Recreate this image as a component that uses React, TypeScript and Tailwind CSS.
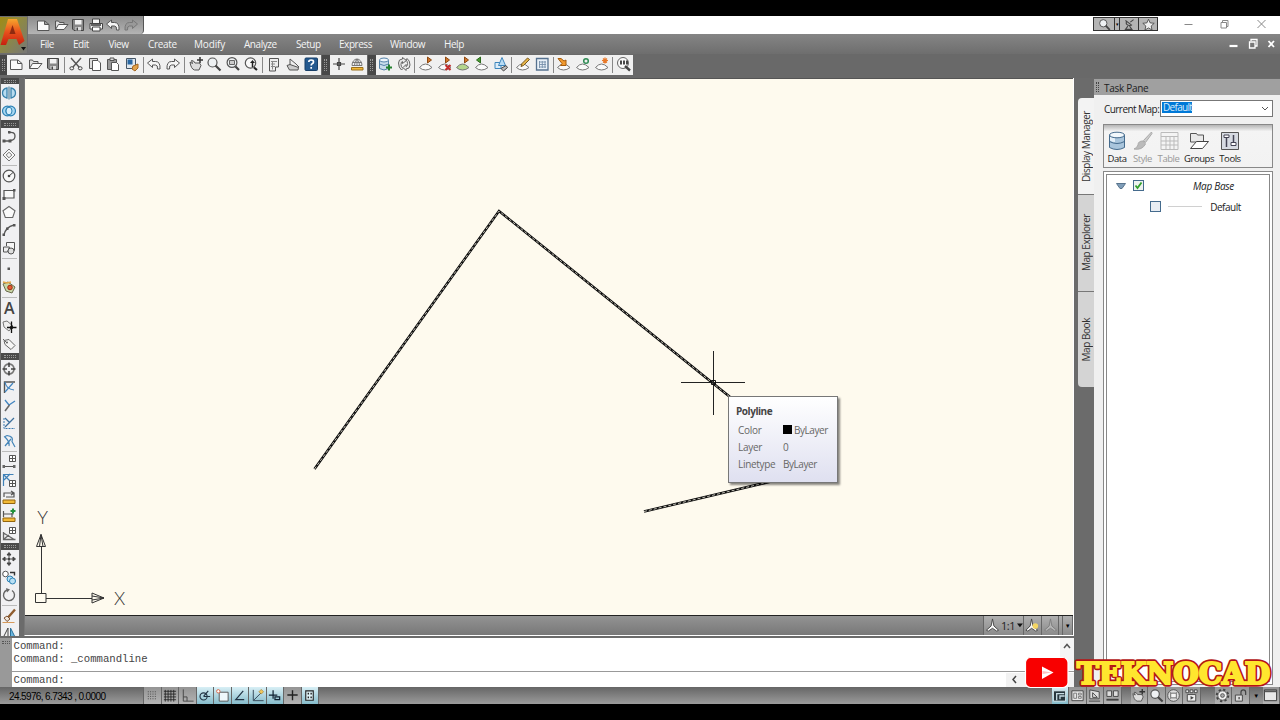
import type { ReactNode } from "react";

// Every glyph is drawn on a 16x16 grid.
const G = "#555";
const LIGHT = "#f4f4f4";

const layerSheet = (fill = "#fafafa") => (
  <path d="M1.5 11.5q3-3.500 6-3.500t6.500 3.500q-3 2.500-6.500 2.500t-6-2.500z" fill={fill} stroke="#777" />
);

const glyphs: Record<string, ReactNode> = {
  new: <path d="M2.500 4h7.500l4 3.500v6h-11.500zM9.500 4v3.500h4.500" fill="#fafafa" stroke={G} />,
  open: (
    <>
      <path d="M2.500 12.500v-8.500h3l1 1.500h4.500v2" fill="#ddd" stroke={G} />
      <path d="M2.500 12.500l3-5h9.500l-4 5z" fill="#fafafa" stroke={G} />
    </>
  ),
  save: (
    <>
      <path d="M2.500 2.500h11v11h-9.500l-1.500-1.500z" fill="#888" stroke="#444" />
      <path d="M5 3h6.500v4.500h-6.500z" fill="#f2f2f2" />
      <path d="M5.500 10h5.500v3.500h-5.500z" fill="#ddd" />
      <path d="M6.500 10.500h1.500v3h-1.500z" fill="#444" />
    </>
  ),
  print: (
    <>
      <path d="M4.500 6.500v-4.500h7v4.500M2 6.500h12.500v5.500h-12.500z" fill={LIGHT} stroke="#444" />
      <path d="M4.500 10h7.500v4h-7.500z" fill="#fff" stroke="#444" />
      <path d="M3 8h10" stroke="#333" strokeWidth="1.500" />
    </>
  ),
  undo: <path d="M1.500 7l5-4v2.500h3q5 0 4.500 7.500h-2.500q0.500-4-2-4h-3v2.500z" fill="#f5f5f5" stroke={G} />,
  redo: <path d="M14.500 7l-5-4v2.500h-3q-5 0-4.500 7.500h2.500q-0.500-4 2-4h3v2.500z" fill="#f5f5f5" stroke={G} />,
  redoDim: <path d="M14.500 7l-5-4v2.500h-3q-5 0-4.500 7.500h2.500q-0.500-4 2-4h3v2.500z" fill="#999" stroke="#777" />,
  cut: (
    <>
      <path d="M3 2l8 9M13 2l-8 9" stroke={G} strokeWidth="1.400" />
      <ellipse cx="3.800" cy="12.300" rx="1.900" ry="1.600" fill="none" stroke="#444" />
      <ellipse cx="12.200" cy="12.300" rx="1.900" ry="1.600" fill="none" stroke="#444" />
    </>
  ),
  copy: (
    <>
      <path d="M2.500 2.500h8v10h-8z" fill="#ddd" stroke={G} />
      <path d="M5.500 4.500h5.500l2.500 2.500v7.500h-8z" fill="#fff" stroke={G} />
    </>
  ),
  paste: (
    <>
      <path d="M2.500 3.500h9v10h-9z" fill="#999" stroke={G} />
      <path d="M5 2h4v2.500h-4z" fill="#ddd" stroke={G} />
      <path d="M6.500 6.500h5l2 2v6h-7z" fill="#fff" stroke={G} />
    </>
  ),
  match: (
    <>
      <path d="M2.500 2.500h9v10h-9z" fill="#dfe7ee" stroke="#456" />
      <path d="M3.500 3.500h5v5h-5z" fill="#2867a3" />
      <path d="M9 10l5-2v4l-3 3-3-2z" fill="#e0a24d" stroke="#a5671f" />
    </>
  ),
  pan: (
    <>
      <path d="M2 6l2.500 1.500-1-3 2 0.500 1.500 2h4.500l1.500 2.500-2 4.500h-4.500q-3.500-1-4.500-8z" fill="#ddd" stroke={G} />
      <path d="M12 1v6M9 4h6" stroke="#333" strokeWidth="1.500" />
    </>
  ),
  zoom: (
    <>
      <circle cx="6.500" cy="6.500" r="4.500" fill="#eef1f3" stroke="#555" strokeWidth="1.200" />
      <path d="M9.500 9.500l5 5" stroke="#444" strokeWidth="2.200" />
    </>
  ),
  zoomWin: (
    <>
      <circle cx="7" cy="6.500" r="4.900" fill="#eef1f3" stroke="#555" strokeWidth="1.200" />
      <path d="M4.500 4.500h5v4h-5z" fill="#ccc" stroke="#666" />
      <path d="M10.500 10.500l3.500 3.500" stroke="#444" strokeWidth="2.200" />
    </>
  ),
  zoomPrev: (
    <>
      <circle cx="7.500" cy="7" r="5.200" fill="#f8f8f8" stroke="#555" strokeWidth="1.200" />
      <path d="M7 7l2.500-3 2.500 3z" fill="#222" />
      <path d="M9.500 6v5" stroke="#222" strokeWidth="1.500" />
      <path d="M11 11.500l3 2.500" stroke="#222" strokeWidth="2.200" />
    </>
  ),
  sheet: (
    <>
      <path d="M3.500 2.500h9v8.500h-3v4h-6z" fill="#eee" stroke={G} />
      <path d="M5 5.500h6M5 8h4M5 10.500h4M6.500 5v8.500" stroke="#888" />
    </>
  ),
  markup: (
    <>
      <path d="M5 3l6 5 3 3-2 1-7-3z" fill="#eee" stroke={G} />
      <path d="M2 9.500l3-1 8.500 3-0.500 2.500h-8.500z" fill="#ccc" stroke={G} />
    </>
  ),
  help: (
    <>
      <rect x="2" y="2" width="12.500" height="12.500" rx="1" fill="#24598f" stroke="#173f68" />
      <path d="M5.800 6q0-2 2.400-2t2.300 2q0 1.200-1.300 1.800-1 0.500-1 1.700M8.200 11v1.800" fill="none" stroke="#fff" strokeWidth="1.700" />
    </>
  ),
  cross: <path d="M8 2v12M2 8h12M6.500 6.500h3v3h-3z" fill="none" stroke="#444" strokeWidth="1.200" />,
  globe: (
    <>
      <path d="M3 9.500a5 6.500 0 0 1 10 0zM8 3v6.500M3.500 6.500h9" fill="#f4f4f4" stroke="#777" />
      <path d="M5.500 9.500q0-4 2.500-6.500q2.500 2.500 2.500 6.500" fill="none" stroke="#777" />
      <path d="M2.500 11.500h11.500v2.500h-11.500z" fill="#f3b93b" stroke="#9a701c" />
    </>
  ),
  db: (
    <>
      <path d="M2.500 4v8.500q4.500 3 9 0v-8.500" fill="#c9dcec" stroke="#5583a9" />
      <ellipse cx="7" cy="4" rx="4.500" ry="2" fill="#eef6fc" stroke="#5583a9" />
      <path d="M2.500 8q4.500 3 9 0" fill="none" stroke="#5583a9" />
      <path d="M12 8.500v6M9 11.500h6" stroke="#23802f" strokeWidth="2" />
    </>
  ),
  refresh: (
    <>
      <path d="M2.500 7q0-4 4-4v-1.500l4 3-4 3v-2q-1.500 0-1.500 3 0 2.500 2 4l-1.500 1.500q-3-2.500-3-7z" fill="#e8e8e8" stroke="#666" />
      <path d="M14 9q0 4-4 4v1.500l-3-3 3-3v2q1.500 0 1.500-3 0-2-1.500-3.500l1-1.500q3 2 3 6.500z" fill="#e8e8e8" stroke="#666" />
    </>
  ),
  layerOut: (<>{layerSheet()}<path d="M9.500 1l4 3-4 3z" fill="#d0762d" stroke="#8e4a12" /></>),
  layerDel: (<>{layerSheet()}<path d="M8.500 1l4 3-4 3z" fill="#d0762d" stroke="#8e4a12" /><path d="M8.500 9l5 5M13.500 9l-5 5" stroke="#c42b2b" strokeWidth="2" /></>),
  layerGreen: (<>{layerSheet("#b4d68d")}<path d="M9.500 1l4 3-4 3z" fill="#d0762d" stroke="#8e4a12" /></>),
  layerIn: (<>{layerSheet()}<path d="M6.500 1l-4 3 4 3z" fill="#4b9a35" stroke="#2c6a1c" /></>),
  shapes: (
    <>
      <path d="M2 6.500h6v6h-6z" fill="#dcecf8" stroke="#3d86bd" />
      <path d="M9 1.500l3.500 8h-7z" fill="#b9dcf4" stroke="#3d86bd" />
      <path d="M8 12.500l5-3 1.500 2-4 3.500z" fill="#bbb" stroke="#444" />
    </>
  ),
  layerPen: (<>{layerSheet()}<path d="M6 10.500l1-3 5.500-5.500 2 1.500-6 6z" fill="#e7b548" stroke="#76571e" /></>),
  grid: (
    <>
      <path d="M2.500 2.500h11.500v11.500h-11.500z" fill="#e8f0f8" stroke="#55718f" strokeWidth="1.300" />
      <path d="M5 6h7M5 8.500h7M5 11h7M5.500 5v7M8.300 5v7M11 5v7" stroke="#7790aa" strokeWidth="0.900" />
    </>
  ),
  layerArrow: (<>{layerSheet()}<path d="M2 2.500l3 0 3 2.500 2-1v5.500h-5.500l1.500-2z" fill="#f19a2f" stroke="#a55c0e" /></>),
  layerSync: (<>{layerSheet()}<circle cx="11" cy="5" r="2.300" fill="none" stroke="#2f8b54" strokeWidth="1.500" /></>),
  layerStar: (<>{layerSheet()}<path d="M11 1.500v6M8 4.500h6M9 2.500l4 4M13 2.500l-4 4" stroke="#e8792a" strokeWidth="1.200" /></>),
  zoomInfo: (
    <>
      <circle cx="7" cy="7" r="5.500" fill="#fafafa" stroke="#666" />
      <path d="M5 4.500v4M8 4.500v4M11 4.500v4" stroke="#333" strokeWidth="1.800" />
      <path d="M9 10l5 4.500" stroke="#444" strokeWidth="2.400" />
    </>
  ),
  mirrorBlue: (
    <>
      <path d="M6 3q-4.500 1-4.500 5t4.500 5zM10 3q4.500 1 4.500 5t-4.500 5z" fill="#b8dcf0" stroke="#3a83ad" strokeWidth="1.300" />
      <path d="M8 1.500v13" stroke="#35708f" />
    </>
  ),
  ringsBlue: (
    <>
      <circle cx="6.300" cy="8" r="4.800" fill="#a9d8f2" stroke="#2d82b5" strokeWidth="1.200" />
      <circle cx="9.700" cy="8" r="4.800" fill="#a9d8f2" stroke="#2d82b5" strokeWidth="1.200" />
      <ellipse cx="8" cy="8" rx="3" ry="3.800" fill="#d8effb" stroke="#2d82b5" />
    </>
  ),
  pline: (
    <>
      <path d="M3 12h6M8 3.500q6-1 6 3.500t-5 4.500" fill="none" stroke={G} strokeWidth="1.300" />
      <path d="M1.500 10.500h3v3h-3zM7.500 10.500h3v3h-3zM7 2h2.500v2.500h-2.500z" fill="#555" />
    </>
  ),
  diamond: <path d="M8 2l6 6-6 6-6-6zM8 5.200l2.800 2.800-2.800 2.800-2.800-2.800z" fill="#f6f6f6" stroke="#777" />,
  circle: (
    <>
      <circle cx="8" cy="8" r="5.800" fill="#f8f8f8" stroke="#555" strokeWidth="1.200" />
      <path d="M8 8l4-3.500" stroke="#444" />
      <circle cx="8" cy="8" r="1.300" fill="#444" />
    </>
  ),
  rect: (
    <>
      <path d="M3 4.500h10v7.500h-10z" fill="#f8f8f8" stroke={G} strokeWidth="1.200" />
      <path d="M1.500 11h3v3h-3zM12 3h2.500v2.500h-2.500z" fill="#555" />
    </>
  ),
  polygon: <path d="M8 2.500l6 4.200-2.300 6.800h-7.400l-2.300-6.800z" fill="#fafafa" stroke="#666" strokeWidth="1.100" />,
  arc: (
    <>
      <path d="M3 13q1.500-8 10-10" fill="none" stroke={G} strokeWidth="1.300" />
      <path d="M1.500 11.500h2.500v2.500h-2.500zM5 5.500h2.500v2.500h-2.500zM12 2h2.500v2.500h-2.500z" fill="#555" />
    </>
  ),
  region: (
    <>
      <path d="M5.500 6v-3.500h8v8h-3" fill="#f6f6f6" stroke={G} />
      <path d="M2.500 7h6l-2 5h-4z" fill="#eee" stroke={G} />
      <circle cx="10" cy="11" r="3" fill="#ddd" stroke={G} />
    </>
  ),
  dot: <path d="M6.500 6.500h2.500v2.500h-2.500z" fill="#555" />,
  tagRed: (
    <>
      <path d="M2 5l5-2 7 5-3 6-6-2z" fill="#c9d8a9" stroke="#6b6a4c" />
      <path d="M2 3l4 1 4-1" stroke="#e2a648" strokeWidth="1.500" fill="none" />
      <circle cx="9" cy="8.500" r="2.300" fill="#e55b31" stroke="#9b2a14" />
    </>
  ),
  tagCross: (
    <>
      <path d="M2 4l4-1 6 5-4 5-5-4z" fill="#eee" stroke="#777" />
      <path d="M10.500 3.500v11.500M6 9.500h9.500" stroke="#111" strokeWidth="1.300" />
      <circle cx="10.500" cy="9.500" r="1.700" fill="#111" />
    </>
  ),
  tag: (
    <>
      <path d="M3 4.500l5-1 6 6-4 4-6-5z" fill="#f6f6f6" stroke="#666" />
      <path d="M2 3l4 4" stroke="#666" />
      <circle cx="6" cy="6.500" r="1" fill="#666" />
    </>
  ),
  target: (
    <>
      <circle cx="8" cy="8" r="5" fill="none" stroke="#777" strokeWidth="1.800" />
      <path d="M8 1.500v4.500M8 10v4.500M1.500 8h4.500M10 8h4.500" stroke="#444" strokeWidth="1.600" />
    </>
  ),
  trimA: (<><path d="M3.500 14v-11h10.500" fill="none" stroke="#555" strokeWidth="1.400" /><path d="M4 3q1 7 9 8M4 13l8-9" stroke="#4285c0" strokeWidth="1.200" fill="none" /></>),
  trimB: (<><path d="M4 3l4 5M8 8l6-4" stroke="#4285c0" strokeWidth="1.300" /><path d="M4 14l4.500-6" stroke="#666" strokeWidth="1.500" /></>),
  trimC: (<><path d="M3 3v10.500h11" fill="none" stroke="#3c7ab1" strokeDasharray="2 1" /><path d="M4 3l5 5M4 12l9-9" stroke="#3d6f9d" strokeWidth="1.300" /></>),
  trimD: <path d="M3 4l3-1.500q7 1 5 6l3 5.500M4 13l6-7M4 4q5 5 4 9" fill="none" stroke="#4384b8" strokeWidth="1.200" />,
  dimGrid: (
    <>
      <path d="M8.500 1.500h6v6h-6zM8.500 4.500h6M11.500 1.500v6" fill="#fff" stroke="#555" />
      <path d="M2 12.500h12" stroke="#555" />
      <path d="M1.500 11h2.500v3h-2.500zM12 11h2.500v3h-2.500z" fill="#666" />
    </>
  ),
  dimTri: (
    <>
      <path d="M2.500 14v-11.500h10M3 3l6 6M3 8l6-6" fill="none" stroke="#3f81b8" strokeWidth="1.200" />
      <path d="M8.500 8.500h6v6h-6zM8.500 11.500h6M11.500 8.500v6" fill="#fff" stroke="#555" />
    </>
  ),
  rulerBack: (
    <>
      <path d="M3 7v-4h9M5 7h8v-4M10 1l3 2-3 2" fill="none" stroke="#555" strokeWidth="1.200" />
      <path d="M2 10h12v3.500h-12z" fill="#f2b937" stroke="#93650f" />
    </>
  ),
  rulerPlus: (
    <>
      <path d="M2.500 3v6M2.500 6h10M11 5v4" stroke="#555" strokeWidth="1.200" />
      <path d="M12 0.500v5M9.500 3h5" stroke="#22913b" strokeWidth="2" />
      <path d="M2 10h12v3.500h-12z" fill="#f2b937" stroke="#93650f" />
    </>
  ),
  slope: (
    <>
      <path d="M8.500 1.500h6v6h-6zM8.500 4.500h6M11.500 1.500v6" fill="#fff" stroke="#555" />
      <path d="M2.500 6v7.500h12M2.500 7l10 6M3 13l5-4" fill="none" stroke="#666" strokeWidth="1.300" />
    </>
  ),
  move: (
    <path d="M8 1.500l2 2.500h-4zM8 14.500l2-2.500h-4zM1.500 8l2.500-2v4zM14.500 8l-2.500-2v4zM8 4v2M8 10v2M4 8h2M10 8h2M7 7h2v2h-2z" fill="#444" stroke="#444" strokeWidth="1" />
  ),
  copyObj: (
    <>
      <circle cx="4.500" cy="5" r="2.800" fill="#fff" stroke="#555" />
      <path d="M9 3.500h4.500v3" fill="none" stroke="#333" strokeWidth="1.400" />
      <circle cx="9" cy="10" r="3" fill="#b9e0f5" stroke="#2d82b5" />
      <circle cx="11.500" cy="12" r="3" fill="#b9e0f5" stroke="#2d82b5" />
    </>
  ),
  rotate: (<><path d="M6 3a5.500 5.500 0 1 0 5 0.500" fill="none" stroke="#666" strokeWidth="1.400" /><path d="M5 1l4 1.500-3 3z" fill="#666" /></>),
  erase: (
    <>
      <path d="M14 1.500l-7 8" stroke="#8f5c2e" strokeWidth="2.400" />
      <path d="M3 10l3-2 3 3-3 2.500z" fill="#efe5da" stroke="#7b5235" />
      <path d="M1.500 14.500h12" stroke="#d79a5a" />
    </>
  ),
  mirror: (<><path d="M7 2v12h-6z" fill="#eee" stroke="#444" /><path d="M9.500 2v12h6z" fill="#6ab7e0" stroke="#2c7099" /></>),
  snap: <path d="M3 4h10M3 6.500h10M3 9h10M3 11.500h10" stroke="#444" strokeWidth="1" strokeDasharray="1 1.500" />,
  gridDots: <path d="M2 3.500h13M2 6.500h13M2 9.500h13M2 12.500h13M3.500 2v12.500M6.500 2v12.500M9.500 2v12.500M12.500 2v12.500" stroke="#222" strokeWidth="0.900" />,
  ortho: <path d="M3.500 1.500v12.500h11M3.500 9.500h4v4.500" fill="none" stroke="#444" />,
  polar: (<><circle cx="7" cy="9" r="3.800" fill="none" stroke="#234" strokeWidth="1.200" /><path d="M7 9h7M7 9l5-6" stroke="#234" strokeWidth="1.200" /></>),
  osnap: (<><path d="M4.500 4.500h9.500v9.500h-9.500z" fill="#eef8fb" stroke="#555" /><circle cx="3.500" cy="3.500" r="1.800" fill="#fff" stroke="#d86a4b" /></>),
  angle: <path d="M12 3l-8 9.500h9" fill="none" stroke="#234" strokeWidth="1.300" />,
  ducs: (<><path d="M3.500 2v11.500h11M4 13l8-8" fill="none" stroke="#345" /><path d="M12 1.500l2.500 2.500-2.500 2.500-2.500-2.500z" fill="#efc65b" stroke="#9a701c" strokeWidth="0.600" /></>),
  dyn: <path d="M6.500 2.500v9M2 7.500h9M8.500 9.500h5v3h-5z" fill="none" stroke="#123" strokeWidth="1.300" />,
  lwt: <path d="M8 2.500v10.500M2.500 7.500h11" stroke="#222" strokeWidth="1.500" />,
  quick: (<><path d="M4 3h8v10h-8z" fill="#dff3f8" stroke="#222" strokeWidth="1.200" /><path d="M6 6h1.500M9 6h1.500M6 10h1.500M9 10h1.500" stroke="#222" strokeWidth="1.800" /></>),
  model: (<><path d="M1.500 3h13v11h-13z" fill="#26363d" stroke="#dbe9ee" /><path d="M5 13v-7h8M8.500 12v-3.500h5" fill="none" stroke="#c7dde5" strokeWidth="1.400" /></>),
  layout: (<><path d="M2 3h12v10.500h-12z" fill="#e7e7e7" stroke="#444" /><path d="M4 5.500h3v5.500h-3zM9 5.500h3v2h-3zM9 9h3v2h-3z" fill="none" stroke="#777" /></>),
  layout2: (<><path d="M3 2v9.500h10v-7.500z" fill="#ddd" stroke="#444" /><path d="M6 5v5M6 10h5l-5-5M2 14h12" stroke="#444" fill="none" /></>),
  views: (<><path d="M2 3h5v6h-5zM9 3h5v6h-5z" fill="#ddd" stroke="#444" /><path d="M1.500 12.500h13" stroke="#444" strokeWidth="2" /></>),
  wheel: (<><circle cx="8" cy="8" r="6.200" fill="#ddd" stroke="#555" /><path d="M5 5.500h6v5h-6z" fill="#f4f4f4" stroke="#666" /><path d="M4 4l1 1.500M12 4l-1 1.500M4 12l1-1.500M12 12l-1-1.500" stroke="#777" /></>),
  motion: (<><path d="M2 2h3v3h-3zM6.500 2h3v3h-3zM11 2h3v3h-3zM3.500 7h9v7h-9z" fill="#eee" stroke="#444" /><path d="M7 8.500l3.500 2-3.500 2z" fill="#444" /></>),
  gear: (<><circle cx="8" cy="8" r="6" stroke="#444" strokeWidth="2.400" strokeDasharray="2.350 2.350" fill="none" /><circle cx="8" cy="8" r="5" fill="#eee" stroke="#555" /><circle cx="8" cy="8" r="2" fill="#aaa" stroke="#555" /></>),
  lock: (<><path d="M2.500 7.500h7.500v6.500h-7.500z" fill="#ddd" stroke="#444" /><path d="M8.500 7.500v-3q0-2.500 2.500-2.500t2.500 2.500v3M6.500 9.500v2.500" fill="none" stroke="#444" strokeWidth="1.300" /></>),
  clean: (<><path d="M1.500 2h13v11.500h-13z" fill="#e7e7e7" stroke="#333" /><path d="M2 3.500h12" stroke="#555" strokeWidth="2" /></>),
  annot: <path d="M8 1l1.500 7.500 5 4.500-2 1-4.500-3-4.500 3-2-1 5-4.500z" fill="#f8f8f8" stroke="#444" />,
  annotSun: (<><path d="M7 1l1.500 7.500 5 4.500-2 1-4.500-3-4 3-2-1 4.500-4.500z" fill="#f8f8f8" stroke="#444" /><circle cx="11" cy="8.500" r="3" fill="#f3d564" /></>),
  annotDim: <path d="M8 1l1.500 7.500 5 4.500-2 1-4.500-3-4.500 3-2-1 5-4.500z" fill="#b4b4b4" stroke="#7d7d7d" />,
  dish: <path d="M3 3l8 6M4 4q-1 6 6 5M6 10l-3 4h8l-3-4M9 5l4-3" fill="none" stroke="#444" strokeWidth="1.300" />,
  star: <path d="M8 1.500l2 4.500 5 0.500-3.700 3.300 1 5-4.300-2.600-4.300 2.600 1-5-3.700-3.300 5-0.500z" fill="#eee" stroke="#444" />,
};

function Icon({ name, size = 16 }: { name: string; size?: number }) {
  return (
    <svg width={size} height={size} viewBox="0 0 16 16" fill="none" className="block shrink-0">
      {glyphs[name]}
    </svg>
  );
}

const menus = [
  { label: "File", width: "w-[33px]" },
  { label: "Edit", width: "w-[35.500px]" },
  { label: "View", width: "w-[39.500px]" },
  { label: "Create", width: "w-[46px] tracking-[-0.300px]" },
  { label: "Modify", width: "w-[50px] tracking-[-0.150px]" },
  { label: "Analyze", width: "w-[52px]" },
  { label: "Setup", width: "w-[43px]" },
  { label: "Express", width: "w-[51px]" },
  { label: "Window", width: "w-[54px]" },
  { label: "Help", width: "w-[30px]" },
];

const topBars = [
  [
    ["new", "open", "save"],
    ["cut", "copy", "paste", "match"],
    ["undo", "redo"],
    ["pan", "zoom", "zoomWin", "zoomPrev"],
    ["sheet", "markup", "help"],
  ],
  [["cross", "globe"]],
  [
    ["db", "refresh"],
    ["layerOut", "layerDel", "layerGreen", "layerIn", "shapes"],
    ["layerPen", "grid"],
    ["layerArrow", "layerSync", "layerStar"],
    ["zoomInfo"],
  ],
];

const sideBars = [
  [["mirrorBlue", "ringsBlue"]],
  [
    ["pline", "diamond"],
    ["circle", "rect", "polygon", "arc", "region"],
    ["dot", "tagRed"],
    ["text", "tagCross", "tag"],
  ],
  [
    ["target", "trimA", "trimB", "trimC", "trimD"],
    ["dimGrid", "dimTri", "rulerBack", "rulerPlus", "slope"],
  ],
  [
    ["move", "copyObj", "rotate"],
    ["erase", "mirror"],
  ],
];

function TitleBar() {
  return (
    <div className="flex h-[18px] bg-white">
      <div className="flex w-[116px] items-center gap-[1.500px] rounded-br-sm border-r border-[#555] bg-linear-to-b from-[#8c8c8c] to-[#b4b4b4] pl-[7px]">
        {["new", "open", "save", "print", "undo", "redoDim"].map((n) => (
          <Icon key={n} name={n} />
        ))}
      </div>
      <div className="flex flex-1 items-center justify-end">
        <div className="mr-[26px] flex h-[14px] w-[65px] -translate-y-px divide-x divide-[#333] border border-[#333] bg-[#b4b4b4]">
          <span className="flex w-[21px] items-center justify-center"><Icon name="zoom" size={13} /></span>
          <span className="flex w-[5px] items-center justify-center text-[5px] text-black">▾</span>
          <span className="flex w-[19px] items-center justify-center"><Icon name="dish" size={13} /></span>
          <span className="flex flex-1 items-center justify-center"><Icon name="star" size={13} /></span>
        </div>
        <svg width="96" height="14" viewBox="0 0 96 14" fill="none" stroke="#888" className="-translate-y-px">
          <path d="M0.500 7.500h8M37 5.500h5.500v5.500h-5.500zM38.500 5.500v-2h5.500v6h-1.500M73.500 3l8 8M81.500 3l-8 8" />
        </svg>
      </div>
    </div>
  );
}

function MenuBar() {
  return (
    <div className="flex h-5 items-center bg-linear-to-b from-[#858585] to-[#6e6e6e] pl-3 text-[10px] text-[#f4f4f4]">
      {menus.map((m) => (
        <span key={m.label} className={m.width}>
          {m.label}
        </span>
      ))}
      <svg width="53" height="14" viewBox="0 0 53 14" fill="none" stroke="#fff" className="ml-auto">
        <path d="M2.500 9h8" strokeWidth="2.200" />
        <path d="M22.500 5h5.500v6h-5.500zM24 4v-1.500h6v6.500h-1.500" strokeWidth="1.300" />
        <path d="M41.500 4l5.500 6M47 4l-5.500 6" strokeWidth="1.800" />
      </svg>
    </div>
  );
}

function Toolbars() {
  return (
    <div className="flex h-6 items-start bg-[#696969] pt-[0.500px]">
      {topBars.map((groups, i) => (
        <div key={i} className="flex h-5">
          <div className={`flex items-center justify-center bg-[#484848] ${i === 0 ? "w-[7px]" : "w-2"}`}>
            <div className="h-3 w-[3px] border-x border-dotted border-[#999]" />
          </div>
          <div className="mr-px flex items-center bg-[#f0f0f0]">
            {groups.map((g, j) => (
              <div key={j} className="flex items-center">
                {j > 0 && <div className="mx-[1.500px] h-4 w-px bg-[#888]" />}
                {g.map((n) => (
                  <div key={n} className="flex w-[18.600px] justify-center pb-px">
                    <Icon name={n} />
                  </div>
                ))}
              </div>
            ))}
          </div>
        </div>
      ))}
    </div>
  );
}

function SideBar() {
  return (
    <div className="h-[558px] w-6 shrink-0 overflow-hidden bg-[#6b6b6b] pl-px">
      {sideBars.map((groups, i) => (
        <div key={i} className="w-[18px]">
          <div className={`flex items-center justify-center bg-[#4a4a4a] ${i === 0 ? "h-[6px]" : i === 1 ? "h-2" : "h-[7px]"}`}>
            <div className="h-[3px] w-3 border-y border-dotted border-[#999]" />
          </div>
          <div className="bg-[#f0f0f2] pr-[1.500px]">
            {groups.map((g, j) => (
              <div key={j}>
                {j > 0 && <div className="mx-px my-px h-px bg-[#bbb]" />}
                {g.map((n) => (
                  <div key={n} className="flex h-[18px] items-center justify-center">
                    {n === "text" ? (
                      <span className="text-[16px] leading-none font-semibold tracking-normal text-[#444]">A</span>
                    ) : (
                      <Icon name={n} />
                    )}
                  </div>
                ))}
              </div>
            ))}
          </div>
        </div>
      ))}
    </div>
  );
}

function Drawing() {
  return (
    <svg width="1048" height="536" viewBox="25 79 1048 536" fill="none" className="block bg-[#fefaee]">
      <path d="M314.500 469L499 211L735 401M644 511.500L790 477" stroke="#0c0c0c" strokeWidth="2.500" />
      <path d="M314.500 469L499 211L735 401M644 511.500L790 477" stroke="#d8d5ca" strokeWidth="0.900" strokeDasharray="3 2" />
      <path d="M713.500 351v64M681 382.500h64" stroke="#222" />
      <path d="M711.500 380.500h4v4h-4z" stroke="#111" />
      <g stroke="#333">
        <path d="M41.500 593v-46M46 598.500h46" />
        <path d="M35.500 593.500h10.500v9h-10.500zM41 534.500l-4.500 12h9zM41 534.500l-1.500 12M41 534.500l2 12M104 598l-12-5v10zM104 598l-12-2M104 598l-12 2" />
      </g>
      <g fill="#333" fontSize="18" fontFamily="Lato, 'Open Sans', sans-serif" fontWeight="300" textAnchor="middle">
        <text x="42.500" y="524">Y</text>
        <text x="119.500" y="605">X</text>
      </g>
    </svg>
  );
}

const props = [
  { label: "Color", value: "ByLayer", swatch: true },
  { label: "Layer", value: "0" },
  { label: "Linetype", value: "ByLayer" },
];

function RolloverTip() {
  return (
    <div className="absolute top-[318px] left-[703px] h-[87px] w-[110px] border border-[#777] bg-linear-to-b from-white to-[#dfe0f0] pt-[7px] pl-[7px] text-[10px] text-[#666] shadow-[2px_2px_2px_#0007]">
      <div className="h-[17px] text-[10px] leading-[14px] font-bold text-[#444]">Polyline</div>
      {props.map((p) => (
        <div key={p.label} className="flex h-[17px] items-center pl-0.5">
          <span className="w-[45px] tracking-[-0.300px]">{p.label}</span>
          {p.swatch && <span className="mr-0.5 size-[9px] bg-black" />}
          <span>{p.value}</span>
        </div>
      ))}
    </div>
  );
}

function CanvasFooter() {
  return (
    <div className="flex h-5 justify-end border-t border-[#222] bg-linear-to-b from-[#939393] to-[#787878]">
      <div className="flex divide-x divide-[#666] border-x border-[#666] bg-linear-to-b from-[#b0b0b0] to-[#8a8a8a] text-[11px] text-[#222]">
        <span className="flex w-10 items-center pl-px">
          <Icon name="annot" size={15} />
          <span className="ml-px">1:1</span>
          <svg width="7" height="5" viewBox="0 0 7 5" className="ml-0.5">
            <path d="M0 0h7l-3.500 4.500z" fill="#111" />
          </svg>
        </span>
        <span className="flex w-[18px] items-center justify-center"><Icon name="annotSun" size={15} /></span>
        <span className="flex w-[17px] items-center justify-center"><Icon name="annotDim" size={15} /></span>
        <span className="w-[4px]" />
        <span className="flex w-[9px] items-center justify-center text-[6px] text-black">▼</span>
      </div>
    </div>
  );
}

function CommandLine() {
  return (
    <div className="flex h-[49px] bg-white tracking-normal text-[#444]">
      <div className="w-3 bg-[#999] pt-[3px]">
        <div className="mx-auto h-[3px] w-2 border-y border-dotted border-[#555]" />
      </div>
      <div className="flex flex-1 flex-col font-['Liberation_Mono',monospace] text-[10.650px]">
        <div className="flex flex-1">
          <div className="flex-1 pt-0.5 pl-[1.500px] leading-[13px] whitespace-pre">
            <div>Command:</div>
            <div>Command: _commandline</div>
          </div>
          <svg width="14" height="32" viewBox="0 0 14 32" fill="none" stroke="#555" className="bg-[#f5f5f5]">
            <path d="M4 10l3-3.500 3 3.500" strokeWidth="1.500" />
          </svg>
        </div>
        <div className="flex h-4 items-center border-t border-[#999]">
          <span className="flex-1 pt-px pl-[1.500px]">Command:</span>
          <svg width="68" height="14" viewBox="0 0 68 14" fill="none" stroke="#444" className="bg-[#f2f2f2]">
            <path d="M10 3l-3 3.500 3 3.500" strokeWidth="1.500" />
          </svg>
        </div>
      </div>
    </div>
  );
}

const tabs = [
  { label: "Display Manager", cls: "h-24 bg-[#f3f3f3] rounded-tl-sm" },
  { label: "Map Explorer", cls: "h-[97px] bg-[#d4d4d4] border-t border-[#777]" },
  { label: "Map Book", cls: "h-24 bg-[#d4d4d4] border-t border-[#777] rounded-bl-sm" },
];

const paneTools = [
  { label: "Data", width: "w-[26px]", dim: false },
  { label: "Style", width: "w-[25px]", dim: true },
  { label: "Table", width: "w-[27px]", dim: true },
  { label: "Groups", width: "w-[34px]", dim: false },
  { label: "Tools", width: "w-[28px]", dim: false },
];

function PaneGlyph({ name }: { name: string }) {
  return (
    <svg width="22" height="22" viewBox="0 0 22 22" fill="none" className="block">
      {name === "Data" && (
        <>
          <path d="M3.500 5v12.500q7.500 4 15 0v-12.500" fill="#a9c5dc" stroke="#456b8d" />
          <path d="M4 6q2 2 5 2v4q-3 0-5-1.500z" fill="#e4eff8" />
          <ellipse cx="11" cy="5" rx="7.500" ry="2.800" fill="#f2f8fc" stroke="#456b8d" />
          <path d="M3.500 11.500q7.500 4 15 0" stroke="#456b8d" />
        </>
      )}
      {name === "Style" && (
        <>
          <path d="M19.500 2l-8 8.500 2 2 6.500-9z" fill="#ccc" stroke="#aaa" />
          <path d="M11 11q-5 0-5 4-1 3-4 4 8 1.500 11.500-5z" fill="#bbb" stroke="#aaa" />
        </>
      )}
      {name === "Table" && (
        <path d="M3 2.500h17v17h-17zM3 6.500h17M3 11h17M3 15h17M8 6.500v13M12 6.500v13M16 6.500v13" fill="#f4f4f4" stroke="#bbb" />
      )}
      {name === "Groups" && (
        <>
          <path d="M2.500 12v-8.500h6l1 1.500h6v7z" fill="#e9e9e9" stroke="#555" />
          <path d="M2.500 18.500l6-7h12l-6 7z" fill="#fff" stroke="#444" />
        </>
      )}
      {name === "Tools" && (
        <>
          <path d="M2.500 2.500h17v17h-17z" fill="#d7dbe2" stroke="#555" />
          <path d="M7.500 8v9M14.500 5v8" stroke="#445" strokeWidth="1.500" />
          <path d="M5 5h5v2.500h-5zM12 12.500h5v3h-5z" fill="#fff" stroke="#445" />
        </>
      )}
    </svg>
  );
}

function TaskPane() {
  return (
    <div className="flex w-[206px] bg-[#6b6b6b] pt-px">
      <div className="flex w-5 flex-col pt-[19px] pl-1">
        {tabs.map((t) => (
          <div key={t.label} className={`flex items-center justify-center ${t.cls}`}>
            <span className="rotate-180 text-[10px] leading-none text-[#333] [writing-mode:vertical-rl]">{t.label}</span>
          </div>
        ))}
      </div>
      <div className="flex flex-1 flex-col bg-[#f0f0f0]">
        <div className="flex h-4 items-center bg-[#a0a0a0] pl-0.5 text-[10px] text-[#222]">
          <div className="mr-[5px] h-2.5 w-[3px] border-x border-dotted border-[#444]" />
          <span className="pt-px tracking-[-0.300px]">Task Pane</span>
        </div>
        <div className="mt-[5px] flex h-[17px] items-center pl-2.5 text-[10px] text-[#222]">
          <span className="w-14 tracking-[-0.550px] whitespace-nowrap">Current Map:</span>
          <div className="flex h-[17px] w-[113px] items-center justify-between border border-[#777] bg-white pr-[3px] pl-px">
            <span className="-translate-y-px bg-[#0078d7] pl-px leading-[11px] tracking-[-0.700px] text-[#d7ebfa]">Default</span>
            <svg width="8" height="6" viewBox="0 0 8 6" fill="none" stroke="#555">
              <path d="M1 1l3 3 3-3" />
            </svg>
          </div>
        </div>
        <div className="mt-[7px] mr-[7px] ml-[9px] flex h-11 border border-[#888] bg-linear-to-b from-[#b5b5b5] via-[#f4f4f4] via-15% to-[#f2f2f2] pt-[5px]">
          {paneTools.map((t) => (
            <div key={t.label} className={`flex flex-col items-center ${t.width} ${t.dim ? "text-[#999]" : "text-[#222]"}`}>
              <PaneGlyph name={t.label} />
              <span className="text-[9.500px] leading-[13px]">{t.label}</span>
            </div>
          ))}
        </div>
        <div className="mt-[3px] mr-[7px] mb-0.5 ml-[9px] flex-1 border border-[#888] bg-white p-0.5">
          <div className="h-full border border-[#888] pr-7 text-[10px] text-[#222]">
            <div className="flex h-[21px] items-center pl-[9px]">
              <svg width="10" height="6" viewBox="0 0 10 6">
                <path d="M0.500 0.500h9l-3.500 5h-2z" fill="#7f9db8" stroke="#58748d" />
              </svg>
              <span className="ml-[7px] flex size-[11px] items-center justify-center border border-[#456b8d] bg-[#eef3f0]">
                <svg width="9" height="9" viewBox="0 0 9 9" fill="none" stroke="#32a02b" strokeWidth="1.800">
                  <path d="M1.500 4.500l2 2.500 4-5.500" />
                </svg>
              </span>
              <span className="mr-[7px] ml-auto tracking-[-0.300px] italic">Map Base</span>
            </div>
            <div className="flex h-[21px] items-center pl-[43px]">
              <span className="size-[11px] border border-[#456b8d] bg-[#e8edf3]" />
              <span className="ml-[7px] h-px w-[34px] bg-[#d0d0d0]" />
              <span className="ml-auto">Default</span>
            </div>
          </div>
        </div>
      </div>
    </div>
  );
}

const toggles = [
  { name: "snap", on: false },
  { name: "gridDots", on: false },
  { name: "ortho", on: false },
  { name: "polar", on: true },
  { name: "osnap", on: true },
  { name: "angle", on: true },
  { name: "ducs", on: true },
  { name: "dyn", on: true },
  { name: "lwt", on: false },
  { name: "quick", on: true },
];

function StatusButton({ name, on = false }: { name: string; on?: boolean }) {
  return (
    <div
      className={`flex h-[17px] w-[17.500px] items-center justify-center border-r border-[#666] bg-linear-to-b ${
        on ? "from-[#d8eff5] to-[#86bccb]" : "from-[#949494] to-[#b4b4b4]"
      }`}
    >
      <Icon name={name} size={15} />
    </div>
  );
}

function StatusBar() {
  return (
    <div className="flex h-[17px] items-center bg-linear-to-b from-[#666] to-[#9c9c9c]">
      <div className="w-[143px] pt-0.5 pl-[9px] font-['Liberation_Sans',sans-serif] text-[10px] tracking-[-0.620px] whitespace-pre text-black">
        <span className="tracking-[-0.620px]">24.5976, 6.7343 , 0.0000</span>
      </div>
      <div className="flex border-l border-[#666]">
        {toggles.map((t) => (
          <StatusButton key={t.name} name={t.name} on={t.on} />
        ))}
      </div>
      <div className="ml-auto flex">
        <StatusButton name="model" on />
        <StatusButton name="layout" />
        <StatusButton name="layout2" />
        <StatusButton name="views" />
        <div className="w-[9px]" />
        <StatusButton name="pan" />
        <StatusButton name="zoom" />
        <StatusButton name="wheel" />
        <StatusButton name="motion" />
        <div className="w-[14px]" />
        <StatusButton name="gear" />
        <StatusButton name="lock" />
        <div className="flex w-[13px] items-center justify-center text-[6px]">▼</div>
        <StatusButton name="clean" />
      </div>
    </div>
  );
}

function ChannelBadge() {
  return (
    <svg width="256" height="36" viewBox="1024 654 256 36" className="absolute top-[654px] left-[1024px]">
      <rect x="1025.500" y="657.500" width="42.500" height="30" rx="5" fill="#f80000" stroke="#fff" strokeWidth="1.200" />
      <path d="M1042 666.500l11.500 6-11.500 6.500z" fill="#fff" />
      <path d="M1042.500 671l9.500 1.500-9.500 1.500z" fill="#f80000" opacity="0.250" />
      <text
        x="1077"
        y="684"
        letterSpacing="0"
        fontFamily="'DejaVu Serif', serif"
        fontWeight="700"
        fontSize="29"
        textLength="193"
        lengthAdjust="spacingAndGlyphs"
        fill="#ffe62e"
        stroke="#b31414"
        strokeWidth="5.400"
        strokeLinejoin="round"
        paintOrder="stroke"
      >
        TEKNOCAD
      </text>
      <text
        x="1077"
        y="684"
        letterSpacing="0"
        fontFamily="'DejaVu Serif', serif"
        fontWeight="700"
        fontSize="29"
        textLength="193"
        lengthAdjust="spacingAndGlyphs"
        fill="#ffe62e"
        stroke="#ffe62e"
        strokeWidth="2.200"
        aria-hidden
      >
        TEKNOCAD
      </text>
    </svg>
  );
}

export default function App() {
  return (
    <div className="relative flex h-[720px] w-[1280px] flex-col overflow-hidden bg-black pt-4 font-['Open_Sans','Noto_Sans',sans-serif] leading-none tracking-[-0.450px]">
      <header className="flex h-[38px] bg-[#6e6e6e]">
        <svg width="28" height="38" viewBox="0 0 28 38" className="shrink-0">
          <defs>
            <linearGradient id="logoBack" x1="0" y1="0" x2="1" y2="1">
              <stop offset="0" stopColor="#a08a14" />
              <stop offset="0.400" stopColor="#8f8a40" />
              <stop offset="1" stopColor="#777" />
            </linearGradient>
            <linearGradient id="logoMark" x1="0" y1="0" x2="0" y2="1">
              <stop offset="0" stopColor="#f7a52c" />
              <stop offset="0.500" stopColor="#e8501c" />
              <stop offset="1" stopColor="#c6200f" />
            </linearGradient>
          </defs>
          <rect y="1" width="27" height="36" fill="url(#logoBack)" />
          <path d="M0.500 29L8 3h9l7.500 22-5.500 4-2.500-6h-8l-2.500 6z" fill="url(#logoMark)" />
          <path d="M9.500 18l3-9 3 9z" fill="#8f2a10" />
          <path d="M21 31h5l-2.500 3.500z" fill="#111" />
        </svg>
        <div className="flex-1">
          <TitleBar />
          <MenuBar />
        </div>
      </header>
      <Toolbars />
      <main className="flex h-[609px]">
        <div className="flex w-[1074px] flex-col">
          <div className="flex h-[558px]">
            <SideBar />
            <div className="relative w-[1050px] border-r border-b border-l border-white border-l-[#777]">
              <div className="h-px bg-[#555]" />
              <Drawing />
              <CanvasFooter />
              <RolloverTip />
            </div>
          </div>
          <div className="h-0.5 bg-[#6b6b6b]" />
          <CommandLine />
        </div>
        <TaskPane />
      </main>
      <StatusBar />
      <ChannelBadge />
    </div>
  );
}
